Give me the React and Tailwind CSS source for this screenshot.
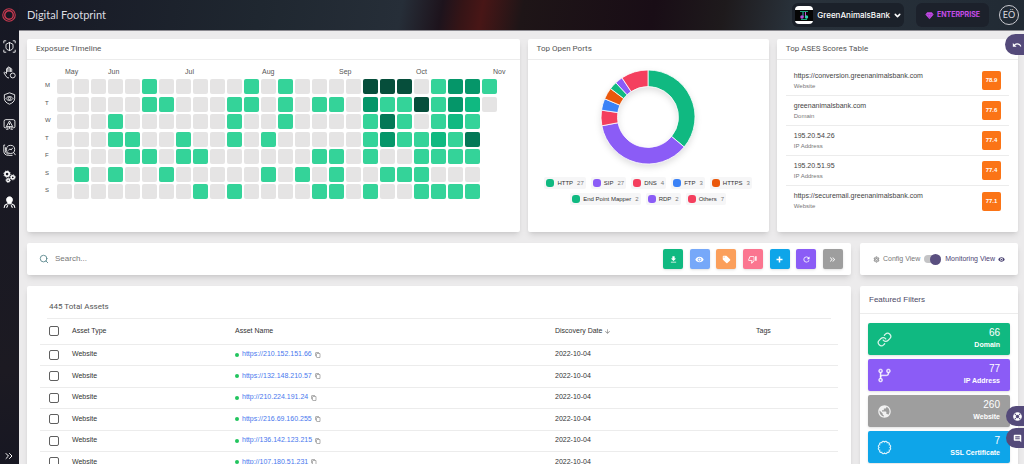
import clsx from 'clsx';
import { Search, Link, ChevronDown, ChevronsRight } from 'lucide-react';
import {
  MdArrowDownward,
  MdComment,
  MdContentCopy,
  MdFileDownload,
  MdKeyboardDoubleArrowRight,
  MdLocalOffer,
  MdOutlineSettings,
  MdOutlineThumbDown,
  MdPublic,
  MdRefresh,
  MdUndo,
  MdVisibility,
} from 'react-icons/md';
import { FaLifeRing } from 'react-icons/fa';
import { GoGitBranch } from 'react-icons/go';

const LEVELS = ['bg-[#e5e4e4]', 'bg-[#34d399]', 'bg-[#10b981]', 'bg-[#059669]', 'bg-[#047857]', 'bg-[#064e3b]'];

// One string per weekday, one digit (exposure level) per week
const EXPOSURE = [
  { day: 'M', weeks: '00000100000101000055501331' },
  { day: 'T', weeks: '00000110001101011031151320' },
  { day: 'W', weeks: '0001000000100100001410121' },
  { day: 'T', weeks: '0001100100101000001311214' },
  { day: 'F', weeks: '0000110110000001101001111' },
  { day: 'S', weeks: '0101001000001010100111000' },
  { day: 'S', weeks: '0000000010100001101001111' },
];

const MONTHS = ['Jun', 'Jul', 'Aug', 'Sep', 'Oct', 'Nov'];

const PORTS = [
  { name: 'HTTP', count: 27, color: '#10b981', swatch: 'bg-[#10b981]' },
  { name: 'SIP', count: 27, color: '#8b5cf6', swatch: 'bg-[#8b5cf6]' },
  { name: 'DNS', count: 4, color: '#f43f5e', swatch: 'bg-[#f43f5e]' },
  { name: 'FTP', count: 3, color: '#3b82f6', swatch: 'bg-[#3b82f6]' },
  { name: 'HTTPS', count: 3, color: '#ea580c', swatch: 'bg-[#ea580c]' },
  { name: 'End Point Mapper', count: 2, color: '#10b981', swatch: 'bg-[#10b981]' },
  { name: 'RDP', count: 2, color: '#8b5cf6', swatch: 'bg-[#8b5cf6]' },
  { name: 'Others', count: 7, color: '#f43f5e', swatch: 'bg-[#f43f5e]' },
];

const SCORES = [
  { name: 'https://conversion.greenanimalsbank.com', type: 'Website', score: '78.9' },
  { name: 'greenanimalsbank.com', type: 'Domain', score: '77.6' },
  { name: '195.20.54.26', type: 'IP Address', score: '77.4' },
  { name: '195.20.51.95', type: 'IP Address', score: '77.4' },
  { name: 'https://securemail.greenanimalsbank.com', type: 'Website', score: '77.1' },
];

const ACTIONS = [
  { label: 'Download', icon: MdFileDownload, color: 'bg-[#10b981]' },
  { label: 'Watch', icon: MdVisibility, color: 'bg-[#76a8f9]' },
  { label: 'Tag', icon: MdLocalOffer, color: 'bg-[#fb9f5b]' },
  { label: 'Dismiss', icon: MdOutlineThumbDown, color: 'bg-[#fb7590]' },
  { label: 'Add', icon: PlusIcon, color: 'bg-[#0ea5e9]' },
  { label: 'Refresh', icon: MdRefresh, color: 'bg-[#8b5cf6]' },
  { label: 'More', icon: MdKeyboardDoubleArrowRight, color: 'bg-[#9e9e9e]' },
];

const ASSETS = [
  'https://210.152.151.66',
  'https://132.148.210.57',
  'http://210.224.191.24',
  'https://216.69.160.255',
  'http://136.142.123.215',
  'http://107.180.51.231',
];

const FILTERS = [
  { label: 'Domain', count: 66, icon: Link, color: 'bg-[#10b981]' },
  { label: 'IP Address', count: 77, icon: BranchIcon, color: 'bg-[#8b5cf6]' },
  { label: 'Website', count: 260, icon: MdPublic, color: 'bg-[#9e9e9e]' },
  { label: 'SSL Certificate', count: 7, icon: SealIcon, color: 'bg-[#0ea5e9]' },
];

const NAV = [
  {
    label: 'Digital footprint',
    art: (
      <>
        <path d="M1.5 6V1.5H6M18 1.5h4.5V6M22.5 18v4.5H18M6 22.5H1.5V18" />
        <path d="M12 4.500l6.500 3.500v6.500c0 2-3 4-6.500 5-3.500-1-6.500-3-6.500-5V8zM12 4v16" />
      </>
    ),
  },
  {
    label: 'Threat prevention',
    art: (
      <>
        <path d="M11 22c-3 0-4.500-1.500-6-4l-3-5c-.6-1.300 1-2.300 2.200-1.200L6.500 14V5.500c0-1.600 2.300-1.600 2.300 0V3c0-1.700 2.500-1.700 2.500 0v1c0-1.700 2.500-1.700 2.500 0v2c0-1.600 2.300-1.600 2.300 0v5M8.800 5.500V11M11.300 4v7M13.800 6v5" />
        <circle cx="18" cy="17.500" r="4.500" />
      </>
    ),
  },
  {
    label: 'Brand monitoring',
    art: (
      <>
        <path d="M12 1.500l9.500 3.500v7c0 5-4 8.500-9.500 10.500C6.500 20.500 2.500 17 2.500 12V5z" />
        <path d="M5.500 12c3.500-5 9.500-5 13 0-3.500 5-9.500 5-13 0z" />
        <circle cx="12" cy="12" r="2.200" />
      </>
    ),
  },
  {
    label: 'Alarms',
    art: (
      <>
        <path d="M7 18H4a2 2 0 0 1-2-2V6a3 3 0 0 1 3-3h14a3 3 0 0 1 3 3v10a2 2 0 0 1-2 2h-3" />
        <path d="M12 5.500L18 16H6zM12 9.500v3.500M9 16v6M12 16v4M15 16v6M6 21h2M16 21h2" />
      </>
    ),
  },
  {
    label: 'Analysis',
    art: (
      <>
        <circle cx="14" cy="10" r="7.500" />
        <path d="M19.500 15.500l3.500 5M10 12l2.500-3 2.500 2 3-4M4 2H1.500v11c0 5 3 8 9 8h7M4.500 6v6c0 4 2 6 6 6.500" />
      </>
    ),
  },
  {
    label: 'Integrations',
    art: (
      <>
        <circle cx="7.500" cy="7.500" r="4" strokeWidth="3" />
        <circle cx="7.500" cy="7.500" r="6" strokeWidth="1.500" strokeDasharray="2.300 2.400" />
        <circle cx="18" cy="13.500" r="3" strokeWidth="2.800" />
        <circle cx="18" cy="13.500" r="4.700" strokeWidth="1.500" strokeDasharray="2 1.700" />
        <circle cx="9.500" cy="19" r="2.500" strokeWidth="2.500" />
        <circle cx="9.500" cy="19" r="4" strokeWidth="1.500" strokeDasharray="1.700 1.440" />
      </>
    ),
  },
  {
    label: 'Threat actors',
    art: (
      <>
        <path
          d="M12 1.500c3.300 0 5.500 2.400 5.500 5.500 0 2.800-2 4-2.800 7.500H9.300C8.500 11 6.500 9.800 6.500 7c0-3.100 2.200-5.500 5.500-5.500z"
          fill="currentColor"
        />
        <path d="M8.500 14.500L3.500 17l-1.500 5M15.500 14.500l5 2.500 1.500 5M9 17l-2.500 4.500M15 17l2.500 4.500" strokeWidth="2" />
      </>
    ),
  },
];

function PlusIcon({ className }) {
  return (
    <svg viewBox="0 0 24 24" stroke="currentColor" strokeWidth="4" className={className}>
      <path d="M12 4v16M4 12h16" />
    </svg>
  );
}

function BranchIcon({ className }) {
  return <GoGitBranch className={className} stroke="currentColor" strokeWidth="0.8" />;
}

// Ring with twelve scallops
function SealIcon({ className }) {
  const bumps = Array.from({ length: 12 }, (_, i) => {
    const angle = ((i + 1) * Math.PI) / 6;
    return `A2.4 2.4 0 0 1 ${(12 + 8.8 * Math.sin(angle)).toFixed(2)} ${(12 - 8.8 * Math.cos(angle)).toFixed(2)}`;
  });
  return (
    <svg viewBox="0 0 24 24" fill="none" stroke="currentColor" strokeWidth="1.8" className={className}>
      <path d={`M12 3.2${bumps.join('')}Z`} />
    </svg>
  );
}

const DiamondIcon = ({ className }) => (
  <svg viewBox="0 0 24 24" fill="currentColor" className={className}>
    <path d="M6 3h12l5 6-11 13L1 9z" />
    <path d="M2 9h20M8 9l4 11 4-11" fill="none" stroke="#7a2f96" />
  </svg>
);

const Card = ({ title, className, children }) => (
  <section className={clsx('rounded-xs bg-white shadow-md', className)}>
    {title && (
      <h2 className="border-b border-[#ececec] px-[9px] font-[Roboto,sans-serif] text-[8px] leading-5 text-[#555]">
        {title}
      </h2>
    )}
    {children}
  </section>
);

const Sidebar = () => (
  <aside className="flex w-[19px] shrink-0 flex-col items-center bg-linear-to-b from-[#161824] via-[#1c1a22] via-80% to-[#171722] pr-px text-white">
    <a href="#home" aria-label="Home" className="flex h-[30px] items-center">
      <svg viewBox="0 0 28 28" fill="none" stroke="#c93a50" className="size-[14px]">
        <circle cx="14" cy="14" r="12.500" strokeWidth="2.200" />
        <circle cx="14" cy="14" r="8.500" strokeWidth="2.800" />
      </svg>
    </a>
    <nav className="flex flex-col gap-[13px] pt-[10px]">
      {NAV.map((item) => (
        <a key={item.label} href="#nav" aria-label={item.label}>
          <svg
            viewBox="0 0 24 24"
            fill="none"
            stroke="currentColor"
            strokeWidth="1.6"
            strokeLinejoin="round"
            className="size-[13px]"
          >
            {item.art}
          </svg>
        </a>
      ))}
    </nav>
    <button type="button" aria-label="Expand menu" className="mt-auto pb-[2px]">
      <ChevronsRight className="size-3" />
    </button>
  </aside>
);

const Header = () => (
  <header className="flex h-[30px] shrink-0 items-center bg-[linear-gradient(100deg,#171925_0%,#1f2730_24%,#262e38_38%,#1d131c_42%,#351416_44%,#481616_46%,#1e1517_50%,#190d16_63%,#1e1a1c_70%,#29323b_77%,#212a34_100%)] pr-[5px] pl-2 text-white">
    <h1 className="font-[Lato,sans-serif] text-[11px] text-[#dcdce0]">Digital Footprint</h1>
    <button
      type="button"
      className="mr-3 ml-auto flex h-6 items-center gap-1 rounded-md bg-[#1b212a] pr-[2px] pl-[3px] font-[Inter,sans-serif] text-[8px] font-medium"
    >
      <svg viewBox="0 0 18 18" className="size-[18px]">
        <rect width="18" height="18" rx="4" fill="#fff" />
        <path d="M0 4h18v11H0z" fill="#050505" />
        <path d="M5 5.500h8M6 13.500h6" stroke="#1aa37a" />
        <path d="M8 6v5" stroke="#3bb" />
        <path d="M10.500 6v5" stroke="#c050d0" />
        <circle cx="7" cy="11" r="1.800" fill="#b14fd8" />
        <circle cx="11.500" cy="11" r="1.700" fill="#2fd0b0" />
      </svg>
      GreenAnimalsBank
      <ChevronDown className="-ml-px size-[9px]" strokeWidth={4} />
    </button>
    <button
      type="button"
      className="mr-[10px] flex h-6 items-center gap-[3px] rounded-md bg-[#1c212b] px-[9px] font-[Inter,sans-serif] text-[7px] font-bold text-[#c54be8]"
    >
      <DiamondIcon className="size-[9px]" />
      ENTERPRISE
    </button>
    <button
      type="button"
      className="size-5 rounded-full border border-[#c9c9cf] text-center font-[Lato,sans-serif] text-[9px] text-[#dcdce0]"
    >
      EÖ
    </button>
  </header>
);

const ExposureTimeline = () => (
  <Card title="Exposure Timeline">
    <div className="flex pt-2 pl-[38px] text-[7px] leading-2 text-[#555]">
      <span className="w-[43px]">May</span>
      {MONTHS.map((month) => (
        <span key={month} className="w-[77px] shrink-0 last:w-auto">
          {month}
        </span>
      ))}
    </div>
    <div className="mt-[3px] mb-[33px] flex h-[120px] flex-col justify-between pl-[18px]">
      {EXPOSURE.map((row, i) => (
        <div key={i} className="flex gap-[2px]">
          <span className="w-[10px] text-[6px] leading-[13px] text-[#555]">{row.day}</span>
          {row.weeks.split('').map((level, week) => (
            <span key={week} className={clsx('size-[15px] shrink-0 rounded-[2px]', LEVELS[level])} />
          ))}
        </div>
      ))}
    </div>
  </Card>
);

const Donut = () => {
  const total = PORTS.reduce((sum, port) => sum + port.count, 0);
  const point = (share, radius) => {
    const angle = share * 2 * Math.PI;
    return `${(50 + radius * Math.sin(angle)).toFixed(2)} ${(50 - radius * Math.cos(angle)).toFixed(2)}`;
  };
  let seen = 0;
  return (
    <svg viewBox="0 0 100 100" className="size-[100px] drop-shadow-md" role="img" aria-label="Top open ports">
      {PORTS.map((port) => {
        const start = seen / total;
        seen += port.count;
        const end = seen / total;
        return (
          <path
            key={port.name}
            d={`M${point(start, 47)}A47 47 0 0 1 ${point(end, 47)}L${point(end, 30.5)}A30.5 30.5 0 0 0 ${point(start, 30.5)}Z`}
            fill={port.color}
            stroke="#fff"
            strokeWidth="0.8"
          />
        );
      })}
    </svg>
  );
};

const TopPorts = () => (
  <Card title="Top Open Ports">
    <div className="flex flex-col items-center gap-[10px] pt-[7px]">
      <Donut />
      <ul className="flex flex-wrap justify-center gap-x-[5px] gap-y-1 px-4 text-[6px] leading-3 text-[#333]">
        {PORTS.map((port) => (
          <li key={port.name} className="flex items-center gap-[3px] rounded-xs bg-[#f6f6f7] px-[2px]">
            <span className={clsx('size-2 rounded-[3px]', port.swatch)} />
            {port.name}
            <span className="pl-px text-[#777]">{port.count}</span>
          </li>
        ))}
      </ul>
    </div>
  </Card>
);

const ScoresTable = () => (
  <Card title="Top ASES Scores Table">
    <ul className="px-[9px] pt-[6px]">
      {SCORES.map((row) => (
        <li
          key={row.name}
          className="flex h-[30px] items-center justify-between border-b border-[#ececec] px-2 last:border-b-0"
        >
          <div>
            <p className="text-[7px] leading-[10px] text-[#444]">{row.name}</p>
            <p className="text-[6px] leading-[10px] text-[#777]">{row.type}</p>
          </div>
          <span className="size-[19px] rounded-xs bg-[#fb7416] text-center text-[6px] leading-[19px] font-bold text-white">
            {row.score}
          </span>
        </li>
      ))}
    </ul>
  </Card>
);

const SearchBar = () => (
  <Card className="flex h-8 items-center pr-2 pl-3">
    <Search className="size-[10px] text-[#4f7f86]" />
    <input
      type="search"
      aria-label="Search"
      placeholder="Search..."
      className="min-w-0 flex-1 px-[6px] text-[8px] outline-none placeholder:text-[#777]"
    />
    <div className="flex w-[180px] justify-between">
      {ACTIONS.map(({ label, icon: Icon, color }) => (
        <button
          key={label}
          type="button"
          aria-label={label}
          className={clsx('flex size-5 items-center justify-center rounded-xs text-white shadow-sm', color)}
        >
          <Icon className="size-[9px]" />
        </button>
      ))}
    </div>
  </Card>
);

const ViewSwitch = () => (
  <Card className="flex h-8 items-center justify-center text-[7px]">
    <label className="flex items-center gap-[3px] text-[#777]">
      <MdOutlineSettings className="size-[7px]" />
      Config View
      <input
        type="checkbox"
        defaultChecked
        className="mx-px flex h-2 w-[17px] appearance-none items-center rounded-full bg-[#c4c4c6] before:size-[11px] before:rounded-full before:bg-[#5a4f80] checked:justify-end"
      />
      <span className="text-[#4a4272]">Monitoring View</span>
      <MdVisibility className="size-[7px] text-[#4a4272]" />
    </label>
  </Card>
);

const Checkbox = ({ label }) => (
  <input
    type="checkbox"
    aria-label={label}
    className="ml-[9px] block size-[10px] appearance-none rounded-xs border border-[#5f5f5f] bg-white checked:bg-[#5a4f80]"
  />
);

const AssetsTable = () => (
  <Card className="px-[13px] pt-4">
    <h2 className="mx-[7px] border-b border-[#ececec] pb-[6px] pl-[2px] font-[Roboto,sans-serif] text-[8px] leading-[10px] text-[#555]">
      445 Total Assets
    </h2>
    <table className="w-full table-fixed text-left text-[7px] text-[#333]">
      <colgroup>
        <col className="w-[32px]" />
        <col className="w-[163px]" />
        <col className="w-[320px]" />
        <col className="w-[201px]" />
        <col className="w-[82px]" />
      </colgroup>
      <thead>
        <tr className="h-[25px] border-b border-[#ececec]">
          <th>
            <Checkbox label="Select all assets" />
          </th>
          <th className="font-normal">Asset Type</th>
          <th className="font-normal">Asset Name</th>
          <th className="font-normal">
            <button type="button" className="flex items-center gap-[2px]">
              Discovery Date
              <MdArrowDownward className="size-[7px] text-[#777]" />
            </button>
          </th>
          <th className="font-normal">Tags</th>
        </tr>
      </thead>
      <tbody>
        {ASSETS.map((url) => (
          <tr key={url} className="h-[21px] border-b border-[#ececec] even:h-[22px]">
            <td>
              <Checkbox label={`Select ${url}`} />
            </td>
            <td>Website</td>
            <td>
              <div className="flex items-center gap-[3px]">
                <span className="size-1 rounded-full bg-[#22c55e]" />
                <a href="#asset" className="text-[#4878ee]">
                  {url}
                </a>
                <button type="button" aria-label="Copy address">
                  <MdContentCopy className="block size-[6px] text-[#666]" />
                </button>
              </div>
            </td>
            <td>2022-10-04</td>
            <td />
          </tr>
        ))}
      </tbody>
    </table>
  </Card>
);

const FeaturedFilters = () => (
  <Card>
    <h2 className="border-b border-[#ececec] px-[9px] text-[8px] leading-[27px] text-[#4d4a66]">Featured Filters</h2>
    <div className="flex flex-col gap-1 px-2 pt-[9px]">
      {FILTERS.map(({ label, count, icon: Icon, color }) => (
        <button
          key={label}
          type="button"
          className={clsx(
            'flex h-8 shrink-0 items-center justify-between rounded-xs pr-[10px] pl-[9px] text-white shadow-sm',
            color
          )}
        >
          <Icon className="size-[15px] text-[#ffffffd9]" />
          <span className="flex flex-col items-end">
            <span className="text-[10px] leading-3">{count}</span>
            <span className="text-[7px] leading-3 font-semibold">{label}</span>
          </span>
        </button>
      ))}
    </div>
  </Card>
);

const App = () => (
  <div className="flex h-screen overflow-hidden font-['Liberation_Sans',Arial,sans-serif]">
    <Sidebar />
    <div className="flex min-w-0 flex-1 flex-col">
      <Header />
      <main className="flex min-h-0 flex-1 flex-col gap-[11px] border-t border-[#8b8a90] bg-[#ecebec] pt-2 pr-[6px] pl-2">
        <div className="grid shrink-0 grid-cols-[492fr_241fr_241fr] gap-2">
          <ExposureTimeline />
          <TopPorts />
          <ScoresTable />
        </div>
        <div className="grid shrink-0 grid-cols-[824fr_158fr] gap-[9px]">
          <SearchBar />
          <ViewSwitch />
        </div>
        <div className="grid shrink-0 grid-cols-[824fr_158fr] gap-[9px]">
          <AssetsTable />
          <FeaturedFilters />
        </div>
      </main>
    </div>
    <button
      type="button"
      aria-label="Back"
      className="fixed top-[34px] right-0 flex h-[21px] w-[19px] items-center justify-center rounded-l-full bg-[#544a7a] pl-1 text-white"
    >
      <MdUndo className="size-[10px]" />
    </button>
    <div className="fixed right-0 bottom-4 flex flex-col gap-[2px]">
      <button
        type="button"
        aria-label="Support"
        className="flex h-5 w-[18px] items-center justify-center rounded-l-full bg-[#544a7a] pl-1 text-white"
      >
        <FaLifeRing className="size-[9px]" />
      </button>
      <button
        type="button"
        aria-label="Feedback"
        className="flex h-5 w-[18px] items-center justify-center rounded-l-full bg-[#544a7a] pl-1 text-white"
      >
        <MdComment className="size-[9px]" />
      </button>
    </div>
  </div>
);

export default App;
